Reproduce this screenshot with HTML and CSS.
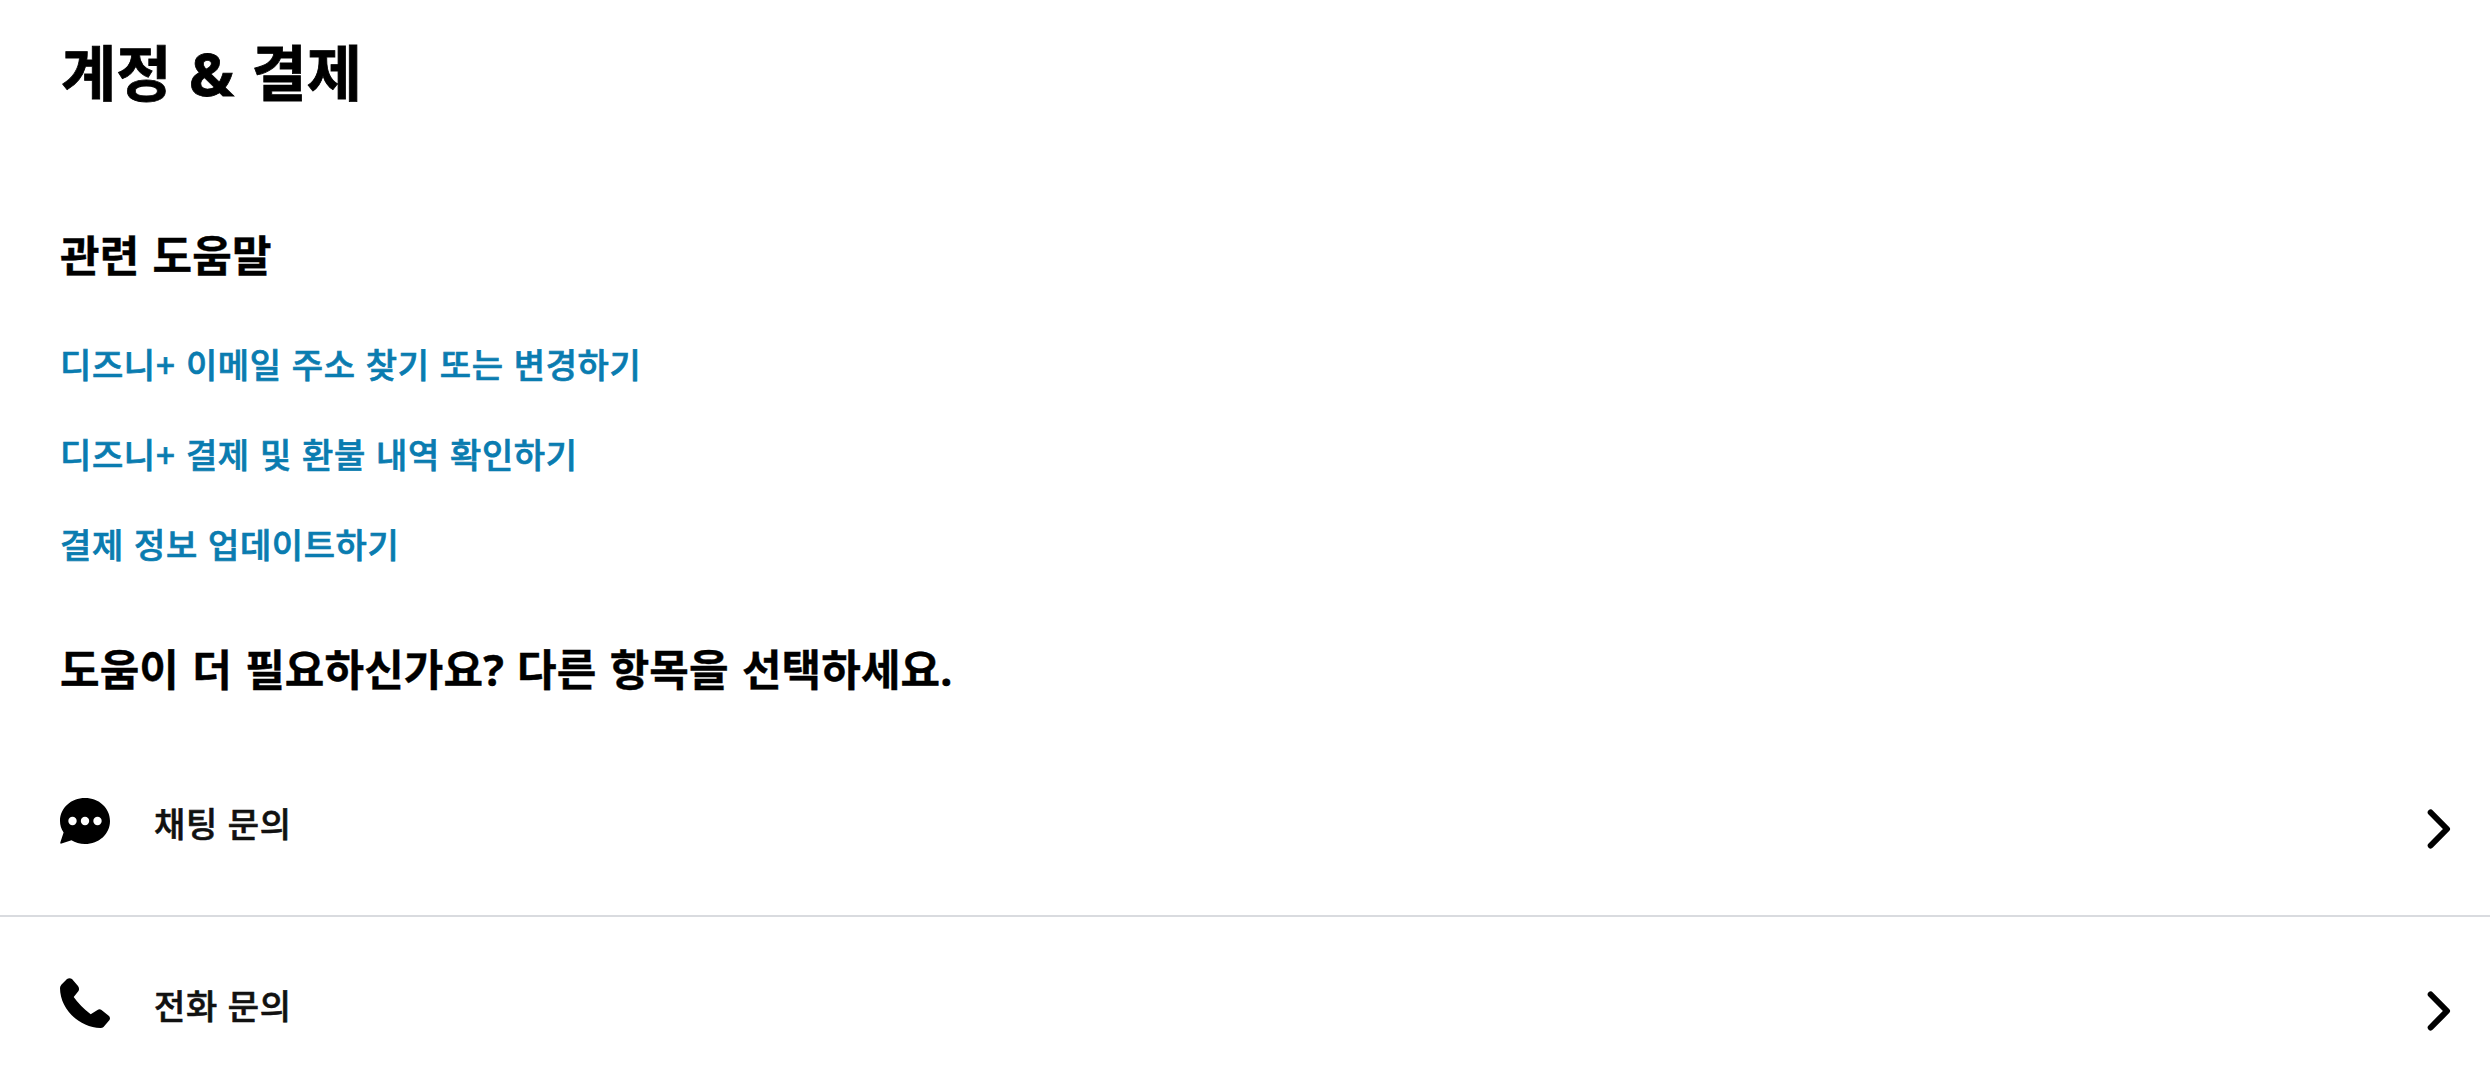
FILE: index.html
```
<!DOCTYPE html>
<html lang="ko">
<head>
    <meta charset="UTF-8">
    <meta name="viewport" content="width=device-width, initial-scale=1.0">
    <title>계정 &amp; 결제</title>
    <link rel="stylesheet" href="styles.css">
</head>
<body>
    <main class="container">
        <h1>계정 &amp; 결제</h1>

        <section class="articulos">
            <h2>관련 도움말</h2>
            <ul class="enlaces">
                <li><a href="#">디즈니+ 이메일 주소 찾기 또는 변경하기</a></li>
                <li><a href="#">디즈니+ 결제 및 환불 내역 확인하기</a></li>
                <li><a href="#">결제 정보 업데이트하기</a></li>
            </ul>
        </section>

        <section class="contacto">
            <h2>도움이 더 필요하신가요? 다른 항목을 선택하세요.</h2>
            <a class="opcion" href="#">
                <svg class="icono" viewBox="0 0 50 50">
                    <path d="M25 2C39 2 50 12 50 25S39 48 25 48C20 48 15 46.500 11.500 44.200L1.500 47.500Q0 48 .3 46.500L3.600 36.500C1.200 33 0 29 0 25C0 12 11 2 25 2Z"/>
                    <g fill="#fff"><circle cx="12.500" cy="25" r="4.200"/><circle cx="25" cy="25" r="4.200"/><circle cx="37.500" cy="25" r="4.200"/></g>
                </svg>
                <span class="texto">채팅 문의</span>
                <svg class="flecha" viewBox="0 0 24 40"><path d="M3.700 3.500L20 20L3.700 36.500"/></svg>
            </a>
            <a class="opcion" href="#">
                <svg class="icono" viewBox="0 0 50 50">
                    <path d="M0 10Q0 8 1.500 6.500L7 1Q9.500-.7 12 1L18 8Q19.800 10.500 18.500 13L13.700 19Q20 28 30.700 36.300L37.500 32Q39.500 30.700 41.500 32L49 38Q50.700 40 49.500 42L43.500 49Q42.500 50 40.500 50C19 49.500 0 31 0 10Z"/>
                </svg>
                <span class="texto">전화 문의</span>
                <svg class="flecha" viewBox="0 0 24 40"><path d="M3.700 3.500L20 20L3.700 36.500"/></svg>
            </a>
        </section>
    </main>
</body>
</html>
```
FILE: styles.css
```
body {
    font-family: "Noto Sans", "Noto Sans CJK KR", sans-serif;
    background-color: #fff;
    margin: 0;
    color: #000;
}

.container {
    height: 100vh;
    overflow: hidden;
}

h1, h2 {
    margin: 0 60px;
    font-weight: bold;
    word-spacing: 2px;
}

h1 {
    margin-left: 61px;
    font-size: 60px;
    line-height: 80px;
    padding-top: 33px;
    -webkit-text-stroke: 0.8px;
}

h2 {
    font-size: 43px;
    line-height: 60px;
    letter-spacing: 0.1px;
    -webkit-text-stroke: 0.4px;
}

.articulos {
    padding-top: 113px;
}

.enlaces {
    list-style: none;
    margin: 34px 60px 0;
    padding: 0;
}

.enlaces li {
    height: 90px;
    line-height: 90px;
    font-size: 34px;
    font-weight: 500;
    letter-spacing: 0.6px;
    word-spacing: 0.8px;
    -webkit-text-stroke: 0.7px;
}

.enlaces a {
    color: #0a7cb0;
    text-decoration: none;
}

.contacto {
    padding-top: 50px;
}

.contacto h2 {
    margin-bottom: 35px;
}

.opcion {
    display: flex;
    align-items: center;
    height: 180px;
    padding: 0 39px 0 60px;
    border-bottom: 2px solid #d9dbdf;
    color: #000;
    text-decoration: none;
}

.opcion:last-child {
    border-bottom: none;
}

.icono {
    width: 50px;
    height: 50px;
    margin-bottom: 8px;
}

.texto {
    flex: 1;
    margin-left: 44px;
    margin-bottom: 5px;
    color: #111;
    font-size: 34px;
    font-weight: 500;
    letter-spacing: 0.6px;
    word-spacing: 0.6px;
    -webkit-text-stroke: 0.6px;
}

.flecha {
    width: 24px;
    height: 40px;
    margin-top: 8px;
    fill: none;
    stroke: #000;
    stroke-width: 6;
    stroke-linecap: round;
    stroke-linejoin: round;
}
```
